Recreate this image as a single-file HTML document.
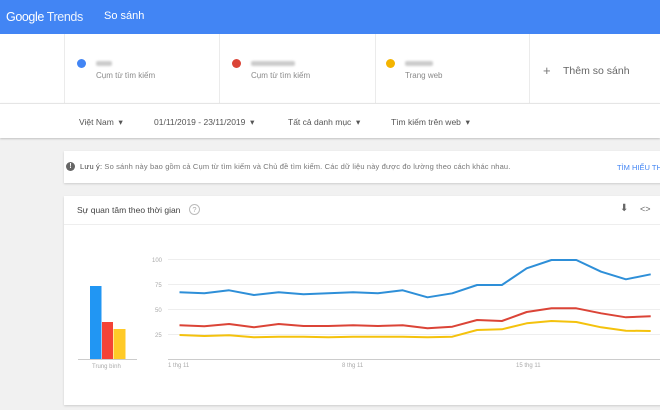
<!DOCTYPE html><html><head><meta charset="utf-8"><style>
*{margin:0;padding:0;box-sizing:border-box}
body{width:660px;height:410px;overflow:hidden;background:#f1f1f1;font-family:"Liberation Sans",sans-serif;position:relative;color:#444}
.a{position:absolute}
.hdr{left:0;top:0;width:660px;height:34px;background:#4285f4;color:#fff}
.terms{left:0;top:34px;width:660px;height:69px;background:#fff}
.div{top:34px;width:1px;height:69px;background:#ebebeb}
.dot{width:9px;height:9px;border-radius:50%}
.blur{height:5px;background:#ccc;border-radius:2px;filter:blur(1px)}
.sub{font-size:8px;color:#8a8a8a}
.filt{left:0;top:103px;width:660px;height:35px;background:#fff;border-top:1px solid #e5e5e5;box-shadow:0 1px 2px rgba(0,0,0,.2)}
.f{font-size:8.5px;color:#555;top:117px}
.card{background:#fff;box-shadow:0 1px 2px rgba(0,0,0,.15)}
</style></head><body>
<div class="a hdr"><span class="a" style="left:6px;top:10px;font-size:12.5px;letter-spacing:-.4px">Google <span style="opacity:.9">Trends</span></span><span class="a" style="left:104px;top:10px;font-size:11px">So sánh</span></div>
<div class="a terms"></div>
<div class="a div" style="left:64px"></div><div class="a div" style="left:219px"></div><div class="a div" style="left:375px"></div><div class="a div" style="left:529px"></div>
<div class="a dot" style="left:77px;top:59px;background:#4285f4"></div>
<div class="a blur" style="left:96px;top:61px;width:16px"></div>
<div class="a sub" style="left:96px;top:71px">Cụm từ tìm kiếm</div>
<div class="a dot" style="left:232px;top:59px;background:#db4437"></div>
<div class="a blur" style="left:251px;top:61px;width:44px"></div>
<div class="a sub" style="left:251px;top:71px">Cụm từ tìm kiếm</div>
<div class="a dot" style="left:386px;top:59px;background:#f4b400"></div>
<div class="a blur" style="left:405px;top:61px;width:28px"></div>
<div class="a sub" style="left:405px;top:71px">Trang web</div>
<div class="a" style="left:543px;top:63px;font-size:13px;color:#777">+</div>
<div class="a" style="left:563px;top:65px;font-size:10.5px;color:#666">Thêm so sánh</div>
<div class="a filt"></div>
<div class="a f" style="left:79px">Việt Nam &nbsp;▾</div>
<div class="a f" style="left:154px">01/11/2019 - 23/11/2019 &nbsp;▾</div>
<div class="a f" style="left:288px">Tất cả danh mục &nbsp;▾</div>
<div class="a f" style="left:391px">Tìm kiếm trên web &nbsp;▾</div>
<div class="a card" style="left:64px;top:151px;width:600px;height:32px"></div>
<div class="a" style="left:66px;top:162px;width:9px;height:9px;border-radius:50%;background:#666;color:#fff;font-size:7px;text-align:center;line-height:9px;font-weight:bold">!</div>
<div class="a" style="left:80px;top:162px;font-size:7.5px;color:#777;white-space:nowrap;letter-spacing:.15px"><b style="color:#444;font-weight:normal">Lưu ý:</b> So sánh này bao gồm cả Cụm từ tìm kiếm và Chủ đề tìm kiếm. Các dữ liệu này được đo lường theo cách khác nhau.</div>
<div class="a" style="left:617px;top:163px;font-size:7.5px;color:#4285f4;white-space:nowrap">TÌM HIỂU THÊM</div>
<div class="a card" style="left:64px;top:196px;width:600px;height:209px"></div>
<div class="a" style="left:64px;top:224px;width:596px;height:1px;background:#eee"></div>
<div class="a" style="left:77px;top:205px;font-size:8.5px;color:#444">Sự quan tâm theo thời gian</div>
<div class="a" style="left:189px;top:204px;width:11px;height:11px;border:1px solid #bbb;border-radius:50%;font-size:7.5px;color:#aaa;text-align:center;line-height:9px">?</div>
<div class="a" style="left:620px;top:203px;font-size:10px;color:#666">⬇</div>
<div class="a" style="left:640px;top:204px;font-size:9px;color:#666">&lt;&gt;</div>
<svg class="a" style="left:0;top:0" width="660" height="410">
<g stroke="#eee" stroke-width="1"><line x1="168" y1="259.5" x2="660" y2="259.5"/><line x1="168" y1="284.5" x2="660" y2="284.5"/><line x1="168" y1="309.5" x2="660" y2="309.5"/><line x1="168" y1="334.5" x2="660" y2="334.5"/></g>
<line x1="168" y1="359.5" x2="660" y2="359.5" stroke="#ccc"/>
<line x1="78" y1="359.5" x2="137" y2="359.5" stroke="#ccc"/>
<g font-size="6" fill="#aaa" font-family="Liberation Sans"><text x="152" y="262">100</text><text x="155" y="287">75</text><text x="155" y="312">50</text><text x="155" y="337">25</text>
<text x="168" y="367">1 thg 11</text><text x="342" y="367">8 thg 11</text><text x="516" y="367">15 thg 11</text><text x="92" y="368">Trung bình</text></g>
<rect x="90" y="286" width="11.5" height="73" fill="#2196f3"/><rect x="102" y="322" width="11" height="37" fill="#f44336"/><rect x="113.5" y="329" width="12" height="30" fill="#ffca28"/>
<g fill="none" stroke-width="2" stroke-linejoin="round">
<polyline stroke="#2e8fd8" points="179.5,292.3 204.3,293.3 229.1,290.3 253.9,295 278.7,292.3 303.5,294.3 328.3,293.3 353.1,292.3 377.9,293.3 402.7,290.3 427.5,297.3 452.3,293.3 477.1,285 501.9,285 526.7,268.3 551.5,260 576.3,260 601.1,271.7 625.9,279.3 650.7,274.3"/>
<polyline stroke="#db4437" points="179.5,325.3 204.3,326.3 229.1,324 253.9,327.3 278.7,324 303.5,326 328.3,326 353.1,325.3 377.9,326 402.7,325.3 427.5,328.3 452.3,326.7 477.1,320 501.9,321 526.7,312 551.5,308.3 576.3,308.3 601.1,313.3 625.9,317.3 650.7,316.3"/>
<polyline stroke="#f4c20d" points="179.5,335 204.3,336 229.1,335.3 253.9,337.3 278.7,336.7 303.5,336.7 328.3,337.3 353.1,336.7 377.9,336.7 402.7,336.7 427.5,337.3 452.3,336.7 477.1,330 501.9,329.3 526.7,323.3 551.5,321 576.3,322 601.1,327.3 625.9,330.7 650.7,331"/>
</g>
</svg>
</body></html>
